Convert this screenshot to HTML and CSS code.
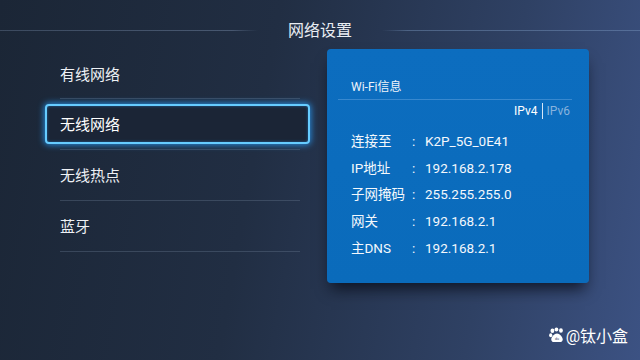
FILE: index.html
```html
<!DOCTYPE html>
<html lang="zh-CN">
<head>
    <meta charset="UTF-8">
    <meta name="viewport" content="width=device-width, initial-scale=1.0">
    <title>网络设置</title>
    <link rel="stylesheet" href="styles.css">
</head>
<body>
    <div class="screen">
        <div class="header">
            <span class="line left"></span>
            <h1>网络设置</h1>
            <span class="line right"></span>
        </div>

        <div class="main">
            <ul class="menu">
                <li>有线网络</li>
                <li class="active">无线网络</li>
                <li>无线热点</li>
                <li>蓝牙</li>
            </ul>

            <div class="panel">
                <div class="panel-title">Wi-Fi信息</div>
                <div class="tabs">
                    <span class="tab on">IPv4</span>
                    <span class="sep"></span>
                    <span class="tab">IPv6</span>
                </div>
                <div class="info">
                    <span>连接至</span><span>:</span><span>K2P_5G_0E41</span>
                    <span>IP地址</span><span>:</span><span>192.168.2.178</span>
                    <span>子网掩码</span><span>:</span><span>255.255.255.0</span>
                    <span>网关</span><span>:</span><span>192.168.2.1</span>
                    <span>主DNS</span><span>:</span><span>192.168.2.1</span>
                </div>
            </div>
        </div>

        <div class="mark">
            <svg width="16" height="16" viewBox="0 0 15 14">
                <ellipse cx="3.2" cy="3" rx="1.8" ry="2.2" fill="#fff"/>
                <ellipse cx="7" cy="1.9" rx="1.8" ry="1.9" fill="#fff"/>
                <ellipse cx="11.2" cy="2.8" rx="1.8" ry="2.1" fill="#fff"/>
                <ellipse cx="1.6" cy="7.3" rx="1.5" ry="1.9" fill="#fff"/>
                <path d="M7.5 5.6c2.4 0 5.4 3.4 5.4 5.6 0 1.6-1.3 2.4-2.6 2.4H4.7c-1.4 0-2.6-.8-2.6-2.4 0-2.2 3-5.6 5.4-5.6z" fill="#fff"/>
                <text x="7.5" y="12" font-size="3.4" text-anchor="middle" fill="#2b3d5c" font-family="Liberation Sans, sans-serif">du</text>
            </svg>
            <span>@钛小盒</span>
        </div>
    </div>
</body>
</html>
```

FILE: styles.css
```css
html, body { margin: 0; padding: 0; }
body { font-family: Roboto, "Noto Sans CJK SC", sans-serif; color: #f2f4f7; }

.screen {
    width: 640px; height: 360px; overflow: hidden; position: relative;
    background: linear-gradient(100deg, #1b2636 0%, #212e43 40%, #2f4164 75%, #3c5283 100%);
}

.header { height: 49px; display: flex; align-items: center; padding-top: 13px; box-sizing: border-box; }
.header h1 { margin: 0 30px; font-size: 16px; font-weight: 400; color: #e9edf3; line-height: 20px; }
.header .line { height: 1px; flex: 1; margin-top: -1px; }
.header .line.left { background: linear-gradient(90deg, rgba(120,140,170,.35), rgba(120,140,170,.45) 90%, rgba(120,140,170,0)); }
.header .line.right { background: linear-gradient(90deg, rgba(120,140,170,0), rgba(120,150,190,.45) 10%, rgba(130,160,200,.4)); }

.main { display: flex; align-items: flex-start; }

.menu { list-style: none; margin: 0 0 0 60px; padding: 0; width: 240px; }
.menu li {
    height: 49px; line-height: 53px; font-size: 15px; color: #eef1f5;
    border-bottom: 1px solid rgba(110,125,150,.35); position: relative;
}
.menu li + li { height: 50px; line-height: 52px; }
.menu li.active { color: #ffffff; isolation: isolate; }
.menu li.active::before {
    content: ""; position: absolute; left: -15px; right: -10px; top: 5px; bottom: 5px;
    border: 2px solid #66ccff; border-radius: 4px; background: #1b2536;
    box-shadow: 0 0 6px 1px rgba(40,160,255,.8), inset 0 0 3px rgba(40,160,255,.5);
    z-index: -1;
}

.panel {
    margin-left: 27px; width: 262px; height: 234px; box-sizing: border-box;
    background: linear-gradient(180deg, #0c6dbf, #0a6bbb);
    border-radius: 4px; padding: 29px 17px 0 11px;
    box-shadow: 0 10px 14px -4px rgba(5,10,20,.75);
}
.panel-title {
    font-size: 12px; color: #eef3fa; padding: 0 0 3px 13px; line-height: 18px;
    border-bottom: 1px solid rgba(140,190,240,.35);
}
.tabs { display: flex; justify-content: flex-end; align-items: center; gap: 4px; height: 21px; font-size: 12px; padding-right: 2px; }
.tab { color: #88b3dd; }
.tab.on { color: #ffffff; }
.tabs .sep { width: 1px; height: 16px; background: #d6e6f7; }

.info {
    display: grid; grid-template-columns: 61px 13px auto; margin-top: 7px; padding-left: 13px;
    font-size: 13.5px; color: #f4f8fc;
}
.info span { height: 26.7px; line-height: 26.7px; }

.mark {
    position: absolute; right: 12px; bottom: 13px; display: flex; align-items: center; gap: 1px;
    font-size: 16px; color: #fff;
}
```
